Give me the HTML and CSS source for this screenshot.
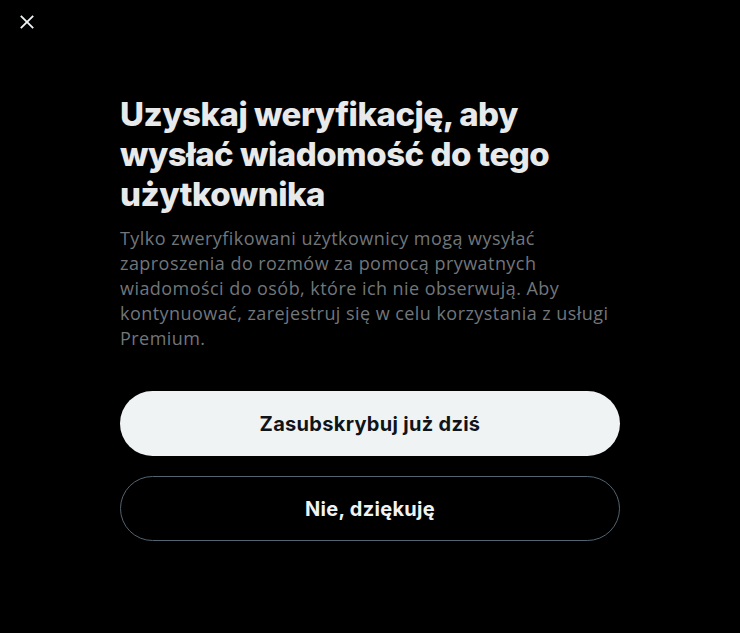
FILE: index.html
```html
<!DOCTYPE html>
<html lang="pl">
<head>
    <meta charset="UTF-8">
    <meta name="viewport" content="width=device-width, initial-scale=1.0">
    <title>Uzyskaj weryfikację</title>
    <link rel="stylesheet" href="styles.css">
</head>
<body>
    <div class="dialog">
        <div class="dialog-header">
            <button class="close-button" aria-label="Zamknij">
                <svg viewBox="0 0 24 24" width="22" height="22" aria-hidden="true">
                    <path d="M10.59 12L4.54 5.96l1.42-1.42L12 10.59l6.04-6.05 1.42 1.42L13.41 12l6.05 6.04-1.42 1.42L12 13.41l-6.04 6.05-1.42-1.42L10.59 12z"></path>
                </svg>
            </button>
        </div>

        <div class="dialog-body">
            <h1>Uzyskaj weryfikację, aby wysłać wiadomość do tego użytkownika</h1>
            <p class="lead">Tylko zweryfikowani użytkownicy mogą wysyłać zaproszenia do rozmów za pomocą prywatnych wiadomości do osób, które ich nie obserwują. Aby kontynuować, zarejestruj się w celu korzystania z usługi Premium.</p>

            <div class="actions">
                <button class="pill pill-primary">Zasubskrybuj już dziś</button>
                <button class="pill pill-outline">Nie, dziękuję</button>
            </div>
        </div>
    </div>
</body>
</html>
```

FILE: styles.css
```css
body {
    margin: 0;
    background-color: #000;
    font-family: "Inter", "Liberation Sans", sans-serif;
    color: #e7e9ea;
}

.dialog {
    width: 740px;
    height: 633px;
    background-color: #000;
}

.dialog-header {
    height: 44px;
    padding: 4px 9px;
    box-sizing: border-box;
}

.close-button {
    width: 36px;
    height: 36px;
    padding: 0;
    display: flex;
    align-items: center;
    justify-content: center;
    background: none;
    border: none;
    border-radius: 50%;
    cursor: pointer;
}

.close-button svg {
    fill: #eff3f4;
}

.dialog-body {
    width: 500px;
    margin: 0 auto;
    padding-top: 50px;
}

h1 {
    margin: 0;
    font-size: 33px;
    font-weight: 800;
    line-height: 40px;
    letter-spacing: -0.5px;
    color: #e7e9ea;
}

.lead {
    margin: 12px 0 0;
    font-family: "Open Sans", "Noto Sans", sans-serif;
    font-size: 18px;
    line-height: 25px;
    letter-spacing: 0.45px;
    color: #71767b;
}

.actions {
    display: flex;
    flex-direction: column;
    gap: 20px;
    margin-top: 40px;
}

.pill {
    height: 65px;
    width: 100%;
    border-radius: 999px;
    font-family: "Inter", "Liberation Sans", sans-serif;
    font-size: 20px;
    font-weight: 700;
    letter-spacing: 0.3px;
    cursor: pointer;
}

.pill-primary {
    background-color: #eff3f4;
    color: #0f1419;
    border: none;
}

.pill-outline {
    background-color: transparent;
    color: #eff3f4;
    border: 1px solid #536471;
}
```
